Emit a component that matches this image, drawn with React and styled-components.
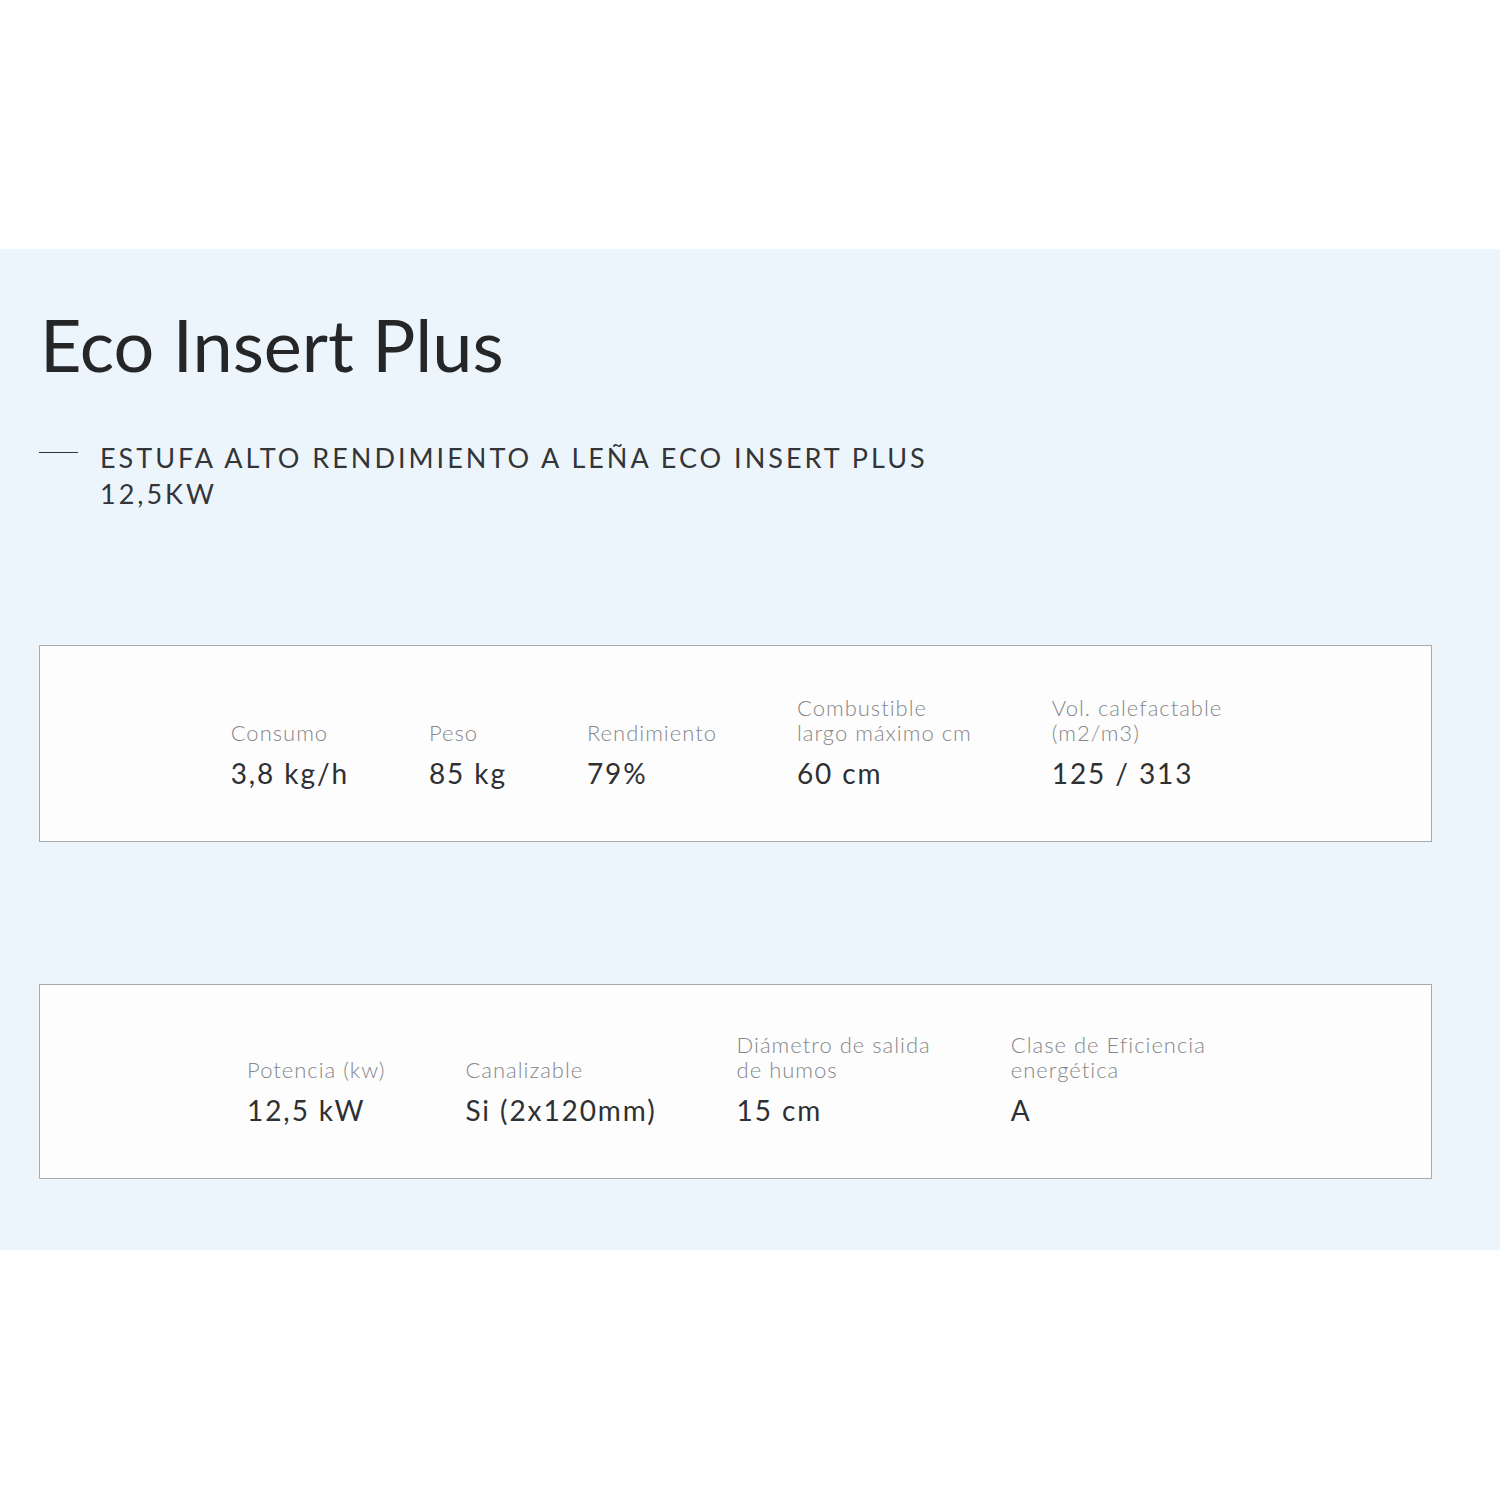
import React from 'react';
import styled, { createGlobalStyle } from 'styled-components';

const GlobalStyle = createGlobalStyle`
  html, body {
    margin: 0;
    padding: 0;
    background: #fefefe;
    font-family: Lato, "Noto Sans", sans-serif;
  }
`;

const Page = styled.div`
  width: 1500px;
  height: 1500px;
  padding-top: 249px;
  box-sizing: border-box;
`;

const Band = styled.section`
  height: 1001px;
  background: #edf5fc;
  padding: 52px 68px 0 39px;
  box-sizing: border-box;
`;

const Title = styled.h1`
  margin: 0 0 0 1px;
  font-size: 72px;
  line-height: 86px;
  font-weight: 400;
  color: #252628;
`;

const Subtitle = styled.div`
  display: flex;
  align-items: flex-start;
  margin-top: 53px;
  gap: 22px;
`;

const Dash = styled.span`
  flex: none;
  width: 39px;
  height: 1px;
  margin-top: 12px;
  background: #333;
`;

const SubText = styled.p`
  margin: 0;
  font-size: 27px;
  line-height: 36px;
  letter-spacing: 3px;
  color: #333538;
  text-transform: uppercase;
  max-width: 880px;
`;

const SpecBox = styled.div`
  margin-top: ${(p) => p.$top}px;
  height: ${(p) => p.$height}px;
  border: 1px solid #a9aaab;
  background: #fdfdfd;
  box-sizing: border-box;
  display: flex;
  justify-content: center;
  align-items: center;
  padding-right: ${(p) => p.$shift}px;
  gap: 80px;
`;

const Spec = styled.div`
  display: flex;
  flex-direction: column;
  justify-content: flex-end;
  align-self: stretch;
  padding-bottom: 52px;
`;

const Label = styled.div`
  font-size: 22px;
  line-height: 25px;
  font-weight: 300;
  letter-spacing: 1px;
  color: #868789;
  white-space: pre-line;
`;

const Value = styled.div`
  margin-top: 12px;
  font-size: 28px;
  line-height: 32px;
  letter-spacing: 1.9px;
  color: #2e3033;
  white-space: nowrap;
`;

const first = [
  { label: 'Consumo', value: '3,8 kg/h' },
  { label: 'Peso', value: '85 kg' },
  { label: 'Rendimiento', value: '79%' },
  { label: 'Combustible\nlargo máximo cm', value: '60 cm' },
  { label: 'Vol. calefactable\n(m2/m3)', value: '125 / 313' },
];

const second = [
  { label: 'Potencia (kw)', value: '12,5 kW' },
  { label: 'Canalizable', value: 'Si (2x120mm)' },
  { label: 'Diámetro de salida\nde humos', value: '15 cm' },
  { label: 'Clase de Eficiencia\nenergética', value: 'A' },
];

const SpecRow = ({ items, top, height, shift }) => (
  <SpecBox $top={top} $height={height} $shift={shift}>
    {items.map((it) => (
      <Spec key={it.label}>
        <Label>{it.label}</Label>
        <Value>{it.value}</Value>
      </Spec>
    ))}
  </SpecBox>
);

const App = () => (
  <Page>
    <GlobalStyle />
    <Band>
      <Title>Eco Insert Plus</Title>
      <Subtitle>
        <Dash />
        <SubText>Estufa alto rendimiento a leña Eco Insert Plus 12,5KW</SubText>
      </Subtitle>
      <SpecRow items={first} top={133} height={197} shift={18} />
      <SpecRow items={second} top={142} height={195} shift={18} />
    </Band>
  </Page>
);

export default App;
